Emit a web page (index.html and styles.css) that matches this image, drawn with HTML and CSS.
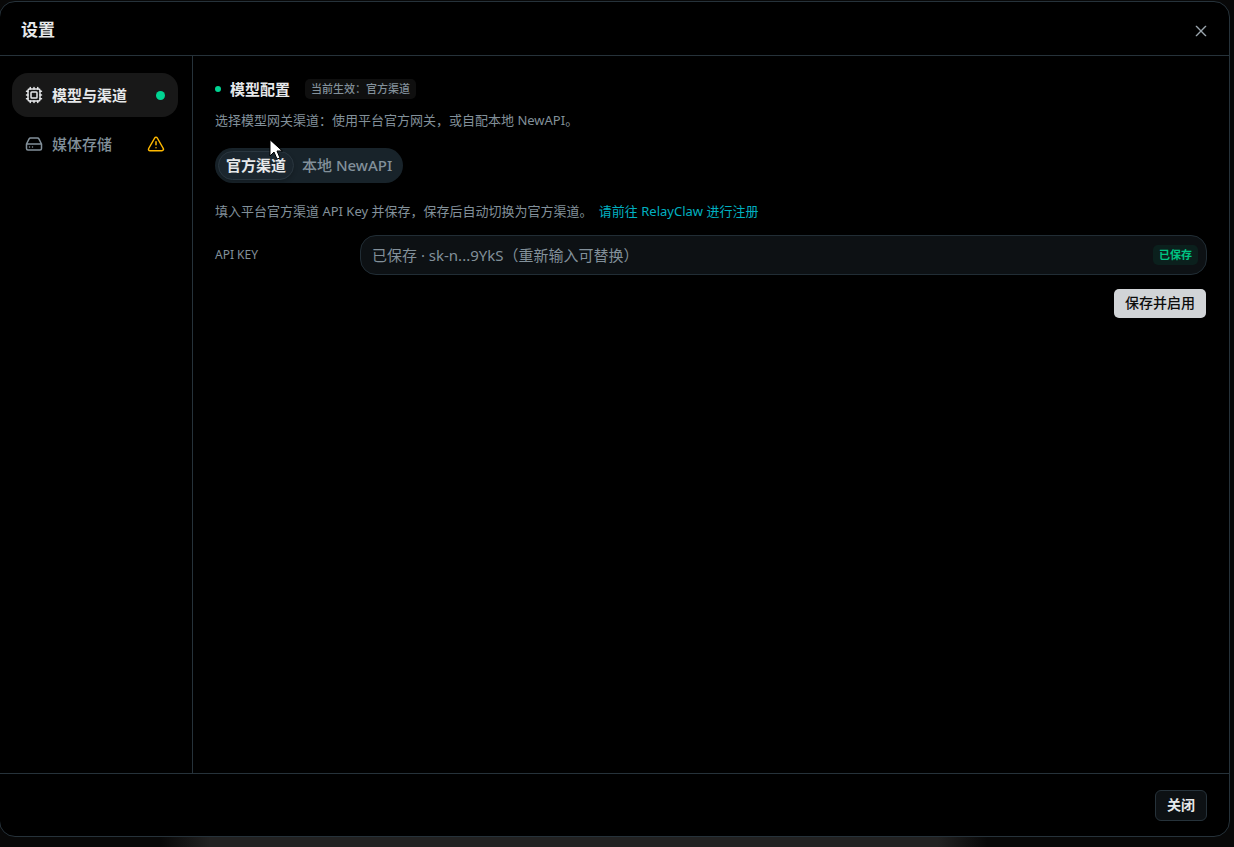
FILE: index.html
```
<!DOCTYPE html>
<html lang="zh-CN">
<head>
	<meta charset="UTF-8">
	<meta name="viewport" content="width=device-width, initial-scale=1">
	<title>设置</title>
	<link rel="stylesheet" href="styles.css">
</head>
<body>
	<div class="backdrop">
		<div class="dialog" role="dialog" aria-labelledby="dialog-title">
			<header class="dialog-header">
				<h1 id="dialog-title">设置</h1>
				<button class="icon-btn" type="button" aria-label="关闭设置">
					<svg width="16" height="16" viewBox="0 0 24 24"><path d="M19 5 5 19M5 5l14 14"/></svg>
				</button>
			</header>

			<div class="dialog-body">
				<nav class="sidebar">
					<button class="nav-item active" type="button">
						<svg width="18" height="18" viewBox="0 0 24 24">
							<rect x="4" y="4" width="16" height="16" rx="2"/>
							<rect x="8" y="8" width="8" height="8" rx="1"/>
							<path d="M12 2v2M7 2v2M17 2v2M12 20v2M7 20v2M17 20v2M2 12h2M2 7h2M2 17h2M20 12h2M20 7h2M20 17h2"/>
						</svg>
						<span>模型与渠道</span>
						<i class="status-dot"></i>
					</button>
					<button class="nav-item" type="button">
						<svg width="18" height="18" viewBox="0 0 24 24">
							<path d="M22 12H2M5.45 5.11 2 12v6a2 2 0 0 0 2 2h16a2 2 0 0 0 2-2v-6l-3.45-6.89A2 2 0 0 0 16.76 4H7.24a2 2 0 0 0-1.79 1.11zM6 16h.01M10 16h.01"/>
						</svg>
						<span>媒体存储</span>
						<svg class="warn" width="18" height="18" viewBox="0 0 24 24">
							<path d="m21.73 18-8-14a2 2 0 0 0-3.48 0l-8 14A2 2 0 0 0 4 21h16a2 2 0 0 0 1.73-3M12 9v4M12 17h.01"/>
						</svg>
					</button>
				</nav>

				<main class="content">
					<div class="section-title">
						<i class="small-dot"></i>
						<h2>模型配置</h2>
						<span class="tag">当前生效：官方渠道</span>
					</div>
					<p class="hint">选择模型网关渠道：使用平台官方网关，或自配本地 NewAPI。</p>

					<div class="tabs" role="tablist">
						<button class="tab selected" type="button" role="tab" aria-selected="true">官方渠道</button>
						<button class="tab" type="button" role="tab" aria-selected="false">本地 NewAPI</button>
						<svg class="pointer" width="14" height="22" viewBox="0 0 14 22"><path d="M1 1v16l4-4 3 7 3-1-3-7h5z"/></svg>
					</div>

					<p class="hint">填入平台官方渠道 API Key 并保存，保存后自动切换为官方渠道。 <a href="#">请前往 RelayClaw 进行注册</a></p>

					<form class="key-form">
						<div class="field">
							<label for="api-key">API KEY</label>
							<div class="input-box">
								<input type="text" id="api-key" placeholder="已保存 · sk-n...9YkS（重新输入可替换）">
								<span class="saved">已保存</span>
							</div>
						</div>
						<button class="save-btn" type="button">保存并启用</button>
					</form>
				</main>
			</div>

			<footer class="dialog-footer">
				<button class="close-btn" type="button">关闭</button>
			</footer>
		</div>
	</div>
</body>
</html>
```
FILE: styles.css
```
* {
	box-sizing: border-box;
	margin: 0;
	padding: 0;
}
body {
	background-color: #080808;
	color: #e6e8ea;
	font-family: "Noto Sans", "Noto Sans CJK SC", sans-serif;
	font-size: 15px;
}
button, input {
	font: inherit;
	color: inherit;
	border: none;
	outline: none;
	background: none;
}
svg {
	flex: none;
	fill: none;
	stroke: currentColor;
	stroke-width: 2;
	stroke-linecap: round;
	stroke-linejoin: round;
}
.backdrop {
	display: flex;
	min-height: 100vh;
	padding: 1px 4px 10px 0;
	background: linear-gradient(90deg, #080808 13%, #222 17%, #222 76%, #080808 80%) bottom / 100% 10px no-repeat;
}
.dialog {
	display: flex;
	flex-direction: column;
	flex: 1;
	margin-left: -1px;
	background-color: #000;
	border: 1px solid #26323a;
	border-radius: 16px;
}
.dialog-header {
	display: flex;
	align-items: center;
	justify-content: space-between;
	height: 54px;
	padding: 2px 20px 0 21px;
	border-bottom: 1px solid #26323a;
}
.dialog-header h1 {
	font-size: 17px;
	line-height: 24px;
	font-weight: 700;
}
.icon-btn {
	display: flex;
	padding-top: 2px;
	color: #9aa5ad;
}
.dialog-body {
	display: flex;
	flex: 1;
}

/* sidebar */
.sidebar {
	width: 193px;
	padding: 17px 14px 17px 12px;
	border-right: 1px solid #26323a;
}
.nav-item {
	display: flex;
	align-items: center;
	gap: 9px;
	width: 100%;
	height: 44px;
	margin-bottom: 5px;
	padding: 0 13px;
	border-radius: 16px;
	color: #82909a;
	font-weight: 500;
	text-align: left;
}
.nav-item span {
	flex: 1;
	padding-bottom: 2px;
}
.nav-item.active {
	background-color: #181818;
	color: #e6e8ea;
	font-weight: 700;
}
.status-dot {
	width: 9px;
	height: 9px;
	border-radius: 50%;
	background-color: #00d492;
}
.warn {
	color: #ffb900;
}

/* content */
.content {
	flex: 1;
	padding: 22px;
}
.section-title {
	display: flex;
	align-items: center;
	height: 22px;
	margin-bottom: 10px;
}
.section-title h2 {
	margin: 0 15px 0 9px;
	padding-bottom: 2px;
	font-size: 15px;
	font-weight: 700;
}
.small-dot {
	width: 6px;
	height: 6px;
	border-radius: 50%;
	background-color: #00d492;
}
.tag, .saved {
	padding: 0 6px;
	border-radius: 5px;
	font-size: 11px;
	line-height: 20px;
	font-weight: 500;
	white-space: nowrap;
}
.tag {
	background-color: #0f0f0f;
	color: #82909a;
}
.hint {
	color: #82909a;
	font-size: 13px;
	line-height: 20px;
}
.hint a {
	margin-left: 3px;
	color: #00b0c0;
	text-decoration: none;
}
.tabs {
	position: relative;
	display: inline-flex;
	height: 35px;
	margin: 18px 0;
	padding: 3px;
	border-radius: 18px;
	background-color: #18232a;
}
.tab {
	padding: 0 7px 2px;
	border: 1px solid transparent;
	border-radius: 15px;
	color: #82909a;
	font-weight: 500;
}
.tab.selected {
	border-color: #2a363f;
	background-color: #1b262e;
	box-shadow: 0 2px 4px rgba(0, 0, 0, 0.2);
	color: #e6e8ea;
	font-weight: 700;
}
.pointer {
	position: absolute;
	top: -9px;
	left: 54px;
	fill: #fff;
	stroke: #000;
	stroke-width: 1;
}
.key-form {
	display: flex;
	flex-direction: column;
	align-items: flex-end;
	gap: 14px;
	margin-top: 14px;
}
.field {
	display: grid;
	grid-template-columns: 145px 1fr;
	align-items: center;
	width: 100%;
}
.field label {
	padding-bottom: 2px;
	color: #82909a;
	font-size: 12px;
}
.input-box {
	display: flex;
	align-items: center;
	height: 40px;
	padding: 0 8px 0 11px;
	border: 1px solid #212d35;
	border-radius: 16px;
	background-color: #0d1114;
}
.input-box input {
	flex: 1;
	min-width: 0;
}
.input-box input::placeholder {
	color: #82909a;
	opacity: 1;
}
.saved {
	background-color: #0b201d;
	color: #00c483;
	font-weight: 700;
}
.save-btn {
	height: 29px;
	margin-right: 1px;
	padding: 0 11px 3px;
	border-radius: 5px;
	background-color: #d1d4d7;
	color: #0c0c0c;
	font-size: 14px;
	font-weight: 500;
}

/* footer */
.dialog-footer {
	display: flex;
	align-items: center;
	justify-content: flex-end;
	height: 63px;
	padding: 0 22px;
	border-top: 1px solid #26323a;
}
.close-btn {
	height: 31px;
	padding: 0 11px 3px;
	border: 1px solid #26323a;
	border-radius: 6px;
	background-color: #0d1114;
	font-size: 14px;
	font-weight: 700;
}
```
